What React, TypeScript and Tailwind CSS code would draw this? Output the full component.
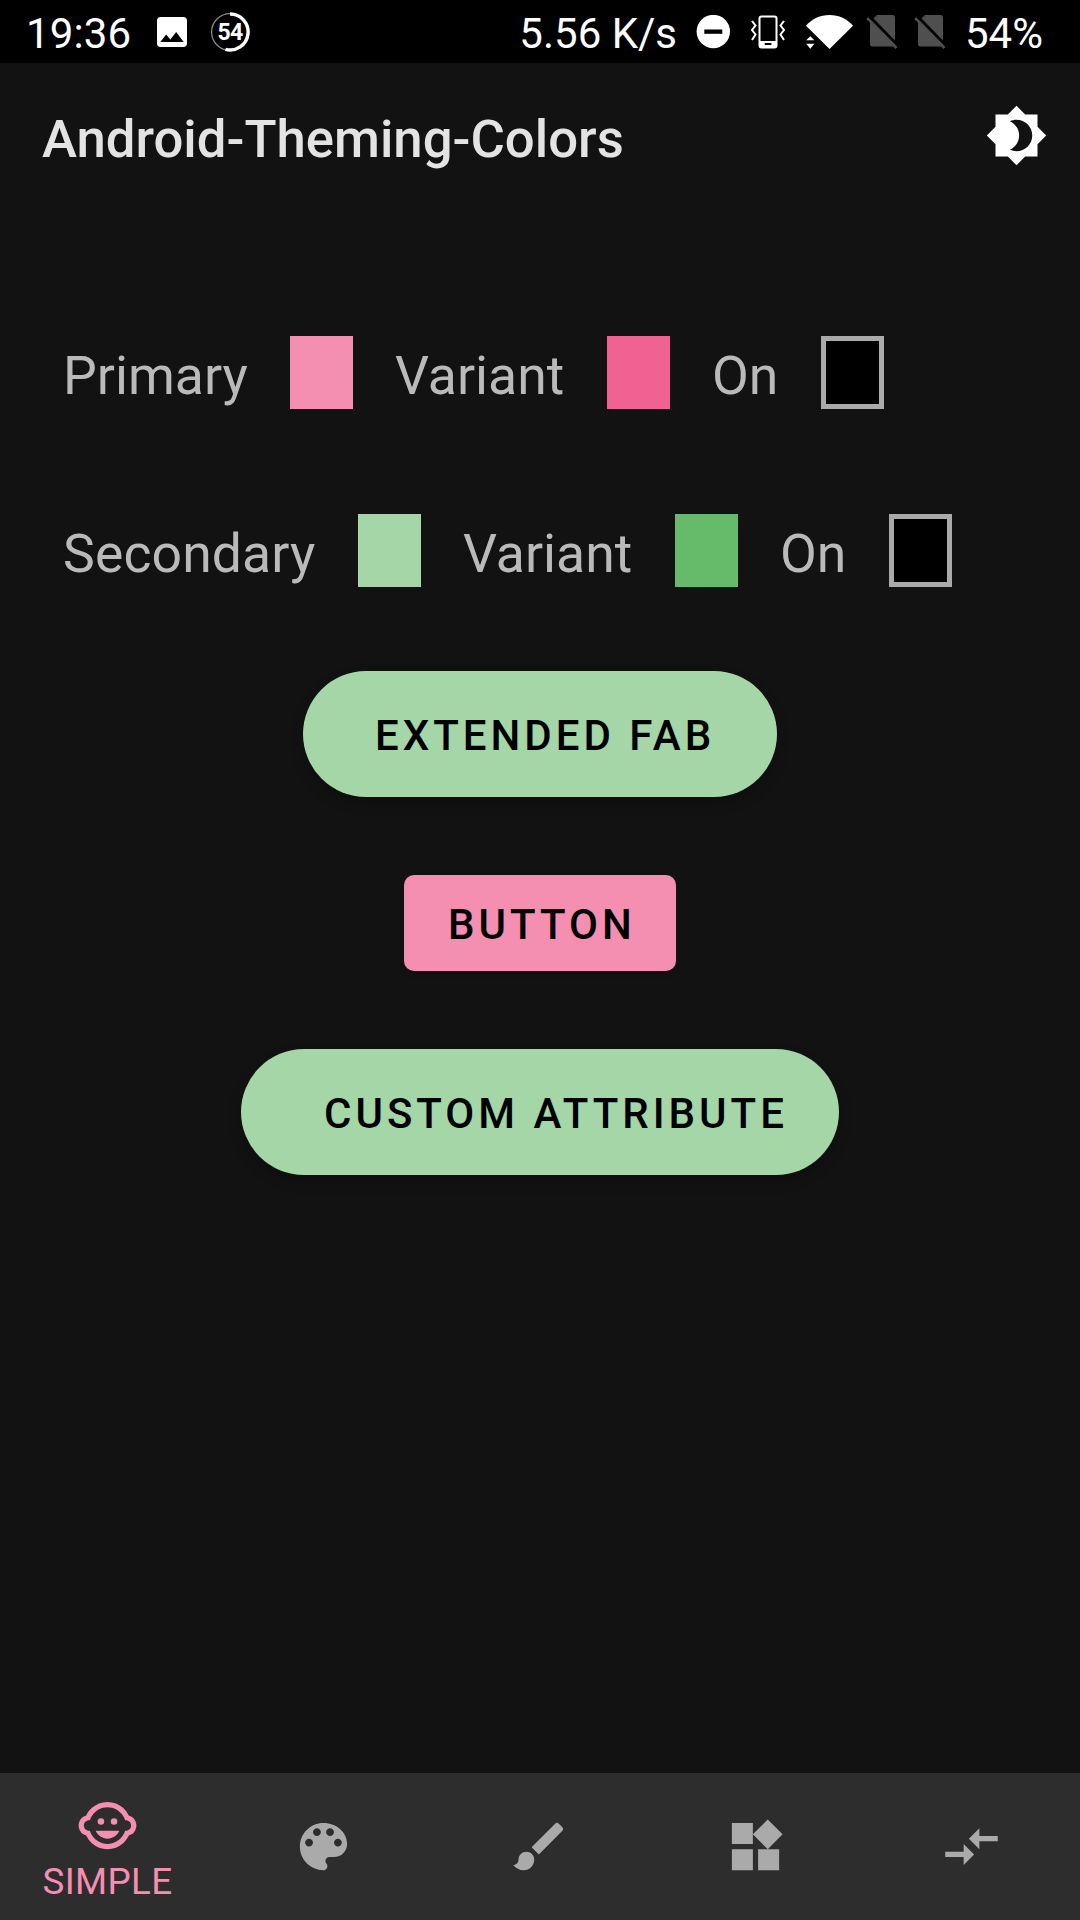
import type { ReactNode } from "react";
import { MdBrightness4, MdBrush, MdChildCare, MdCompareArrows, MdImage } from "react-icons/md";

const label = "relative top-[3px] whitespace-nowrap text-[53.5px] leading-none text-[#bababa]";
const action = "flex items-center self-center whitespace-nowrap text-[42px] font-medium leading-none tracking-[4px] text-black";

type RowProps = { name: string; nameWidth: string; top: string; color: string; variant: string };

function Row({ name, nameWidth, top, color, variant }: RowProps) {
  return (
    <div className={`flex h-[73px] items-center gap-[42px] pl-[63px] ${top}`}>
      <span className={`${label} ${nameWidth}`}>{name}</span>
      <i className={`h-[73px] w-[63px] ${color}`} />
      <span className={`${label} w-[170px]`}>Variant</span>
      <i className={`h-[73px] w-[63px] ${variant}`} />
      <span className={`${label} w-[67px]`}>On</span>
      <i className="h-[73px] w-[63px] border-[5px] border-[#aaaaaa] bg-black" />
    </div>
  );
}

function BatteryRing() {
  return (
    <div className="relative ml-[18px] size-[40px]">
      <svg viewBox="0 0 40 40" className="size-full" fill="none">
        <circle cx="20" cy="20" r="18.400" stroke="#8a8a8a" strokeWidth="1.300" />
        <path d="M20 2a18 18 0 1 1-4.500 35.400" stroke="#fff" strokeWidth="3.400" />
      </svg>
      <span className="absolute inset-0 flex items-center justify-center pt-px text-[23px] font-bold leading-none tracking-[-0.8px]">54</span>
    </div>
  );
}

function DoNotDisturb() {
  return (
    <svg viewBox="0 0 34 34" className="ml-[19px] size-[34px]">
      <circle cx="17.300" cy="16.500" r="16.700" fill="#fff" />
      <path d="M8.300 14.500h18v4.300h-18z" fill="#000" />
    </svg>
  );
}

function Vibrate() {
  return (
    <svg viewBox="0 0 36 34" className="ml-[20px] h-[34px] w-[36px]" fill="none" stroke="#fff" strokeWidth="2">
      <rect x="9.500" y="1.500" width="17" height="31" rx="2" />
      <path d="M9.500 26h17v6h-17z" fill="#fff" stroke="none" />
      <path d="M14.700 29h6.700" stroke="#000" />
      <path d="M2 6l3.500 4.500L2 15l3.500 4.500L2 25M34 6l-3.500 4.500L34 15l-3.500 4.500L34 25" />
    </svg>
  );
}

function Wifi() {
  return (
    <svg viewBox="0 0 47 34" className="ml-[20px] h-[34px] w-[47px]" fill="#fff">
      <path d="M0 10.700C6 4 14 0 23.500 0S41 4 47 10.700L23.500 34z" />
      <path d="M.2 25.300l4.100-4.100 4.100 4.100zM.2 28.700h8.200l-4.100 5z" />
    </svg>
  );
}

function NoSim() {
  return (
    <svg viewBox="0 0 32 34" className="h-[34px] w-[32px]">
      <path d="M11 0h15.500a2.500 2.500 0 0 1 2.500 2.500V29a2.500 2.500 0 0 1-2.500 2.500h-20A2.500 2.500 0 0 1 4 29V7z" fill="#4f4f4f" />
      <path d="M2.500 0.500L33 31.700" stroke="#000" strokeWidth="3" />
      <path d="M1.200 3.200L30.500 33" stroke="#4f4f4f" strokeWidth="2.600" />
    </svg>
  );
}

function Palette() {
  return (
    <svg viewBox="0 0 24 24" className="size-[63px]" fill="currentColor">
      <path d="M12 3c-4.970 0-9 4.030-9 9s4.030 9 9 9c.83 0 1.500-.67 1.500-1.500 0-.39-.15-.74-.39-1.010-.23-.26-.38-.61-.38-.99 0-.83.67-1.500 1.500-1.500H16c2.760 0 5-2.240 5-5 0-4.420-4.030-8-9-8zm-5.500 9c-.83 0-1.500-.67-1.500-1.500S5.670 9 6.500 9 8 9.670 8 10.500 7.330 12 6.500 12zm3-4C8.670 8 8 7.330 8 6.500S8.670 5 9.500 5s1.500.67 1.500 1.500S10.330 8 9.500 8zm5 0c-.83 0-1.500-.67-1.500-1.500S13.670 5 14.500 5s1.500.67 1.500 1.500S15.330 8 14.500 8zm3 4c-.83 0-1.500-.67-1.500-1.500S16.670 9 17.500 9s1.500.67 1.500 1.500-.67 1.500-1.500 1.500z" />
    </svg>
  );
}

function Widgets() {
  return (
    <svg viewBox="0 0 24 24" className="size-[63px]" fill="currentColor">
      <path d="M13 13v8h8v-8h-8zM3 21h8v-8H3v8zM3 3v8h8V3H3zm13.660-1.310L11 7.340 16.660 13l5.660-5.660-5.660-5.650z" />
    </svg>
  );
}

function Tab({ children }: { children: ReactNode }) {
  return <div className="flex items-center justify-center pr-px">{children}</div>;
}

export default function App() {
  return (
    <div className="flex h-[1920px] w-[1080px] flex-col overflow-hidden bg-[#121212] font-[Roboto,sans-serif]">
      <header className="flex h-[63px] shrink-0 items-center bg-black pl-[26px] pr-[37px] text-[42px] leading-none text-white">
        <span className="relative top-[2px] w-[105px] tracking-[0.15px]">19:36</span>
        <MdImage className="ml-[21px] size-[40px]" />
        <BatteryRing />
        <span className="relative top-[2px] ml-auto">5.56 K/s</span>
        <DoNotDisturb />
        <Vibrate />
        <Wifi />
        <div className="ml-[13px] flex gap-[16px]">
          <NoSim />
          <NoSim />
        </div>
        <span className="relative top-[2px] ml-[19px]">54%</span>
      </header>
      <div className="flex h-[145px] shrink-0 items-center justify-between pl-[42px] pr-[32px]">
        <h1 className="relative top-[4px] text-[52.7px] font-medium leading-none text-[#e3e3e3]">Android-Theming-Colors</h1>
        <MdBrightness4 className="size-[63px] text-white" />
      </div>
      <main className="flex flex-1 flex-col">
        <Row name="Primary" nameWidth="w-[185px]" top="mt-[128px]" color="bg-[#f48fb1]" variant="bg-[#f06292]" />
        <Row name="Secondary" nameWidth="w-[253px] tracking-[0.12px]" top="mt-[105px]" color="bg-[#a5d6a7]" variant="bg-[#66bb6a]" />
        <button className={`${action} mt-[84px] h-[126px] w-[474px] rounded-full bg-[#a5d6a7] pl-[72px] pt-[4px] shadow-[0_6px_14px_rgba(0,0,0,0.2)]`}>EXTENDED FAB</button>
        <button className={`${action} mt-[78px] h-[96px] w-[272px] rounded-[10px] bg-[#f48fb1] pl-[44px] pt-[4px] shadow-[0_3px_5px_rgba(0,0,0,0.2)]`}>BUTTON</button>
        <button className={`${action} mt-[78px] h-[126px] w-[598px] rounded-full bg-[#a5d6a7] pl-[83px] pt-[4px] shadow-[0_6px_14px_rgba(0,0,0,0.2)]`}>CUSTOM ATTRIBUTE</button>
      </main>
      <nav className="grid h-[147px] shrink-0 grid-cols-5 bg-[#2d2d2d] text-[#aaaaaa]">
        <div className="flex flex-col items-center pr-px pt-[21px] text-[#f48fb1]">
          <MdChildCare className="size-[63px]" />
          <span className="mt-[7px] text-[36.75px] leading-none tracking-[0.35px]">SIMPLE</span>
        </div>
        <Tab><Palette /></Tab>
        <Tab><MdBrush className="size-[63px]" /></Tab>
        <Tab><Widgets /></Tab>
        <Tab><MdCompareArrows className="size-[63px]" /></Tab>
      </nav>
    </div>
  );
}
